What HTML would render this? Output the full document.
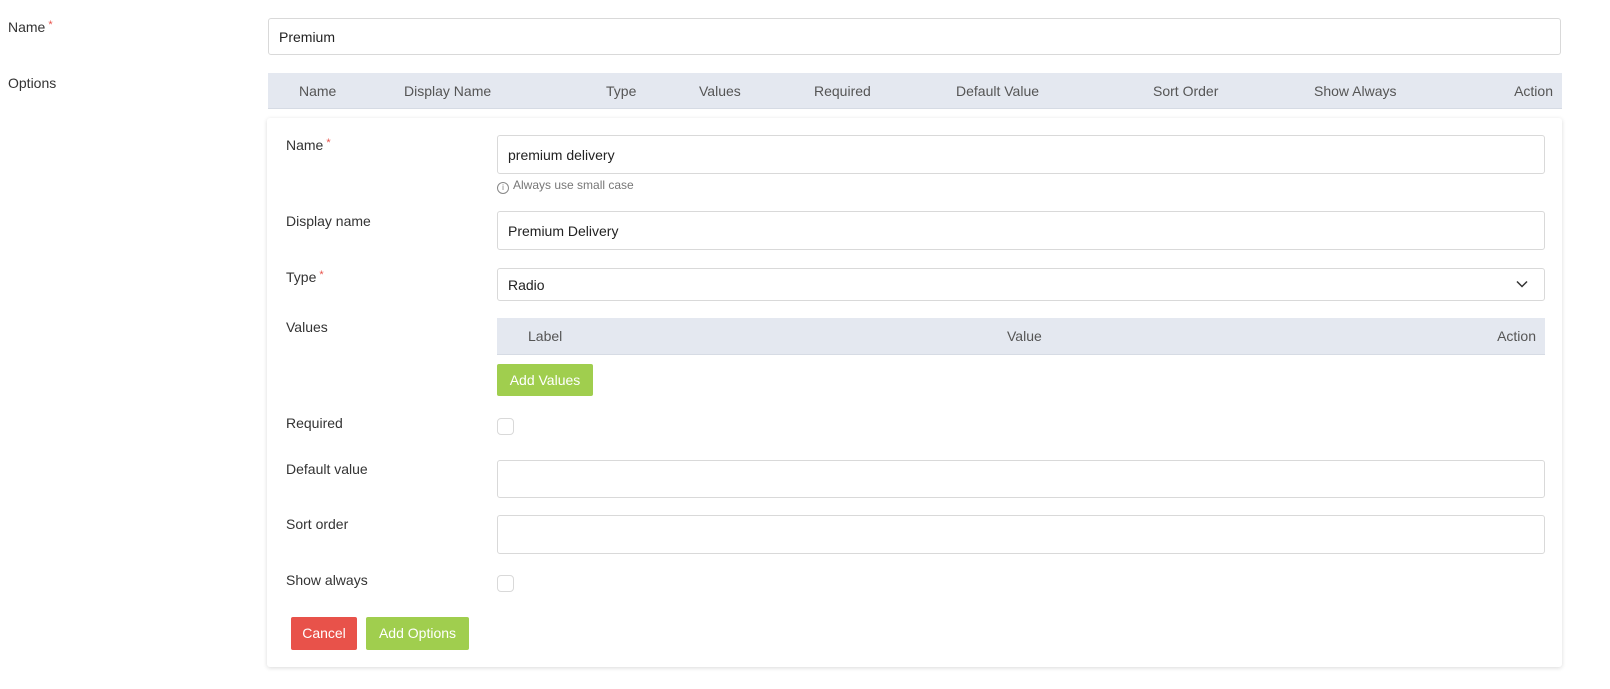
<!DOCTYPE html>
<html><head><style>
body{margin:0;width:1610px;height:689px;background:#fff;font-family:"Liberation Sans",sans-serif;font-size:14px;color:#333;position:relative;overflow:hidden}
.a{position:absolute;white-space:nowrap}
.inp{position:absolute;border:1px solid #d9d9d9;border-radius:3px;box-sizing:border-box;background:#fff}
.inp span{position:absolute;left:10px;top:50%;transform:translateY(-50%);color:#222}
.req{color:#e8524a;font-size:11px;vertical-align:top;margin-left:3px}
.hd{position:absolute;background:#e4e8f0;border-bottom:1px solid #d6dbe4;box-sizing:border-box}
.hd .a{top:50%;transform:translateY(-50%);color:#555}
.cb{position:absolute;width:17px;height:17px;border:1px solid #d9d9d9;border-radius:4px;box-sizing:border-box}
.btn{position:absolute;color:#fff;border-radius:2px;text-align:center;font-size:14px}
</style></head><body>
<div class="a" style="left:8px;top:19px">Name<span class="req">*</span></div>
<div class="inp" style="left:268px;top:18px;width:1293px;height:37px"><span>Premium</span></div>
<div class="a" style="left:8px;top:75px">Options</div>
<div class="hd" style="left:268px;top:73px;width:1294px;height:36px">
<div class="a" style="left:31px">Name</div><div class="a" style="left:136px">Display Name</div><div class="a" style="left:338px">Type</div><div class="a" style="left:431px">Values</div><div class="a" style="left:546px">Required</div><div class="a" style="left:688px">Default Value</div><div class="a" style="left:885px">Sort Order</div><div class="a" style="left:1046px">Show Always</div><div class="a" style="right:9px">Action</div>
</div>
<div style="position:absolute;left:267px;top:118px;width:1295px;height:549px;background:#fff;box-shadow:0 1px 4px rgba(0,0,0,.15);border-radius:3px"></div>
<div class="a" style="left:286px;top:137px">Name<span class="req">*</span></div>
<div class="inp" style="left:497px;top:135px;width:1048px;height:39px"><span>premium delivery</span></div>
<div class="a" style="left:497px;top:178px;font-size:12px;color:#777"><span style="display:inline-block;width:10px;height:10px;border:1px solid #888;border-radius:50%;font-size:8px;line-height:10px;text-align:center;vertical-align:-1px;margin-right:4px">i</span>Always use small case</div>
<div class="a" style="left:286px;top:213px">Display name</div>
<div class="inp" style="left:497px;top:211px;width:1048px;height:39px"><span>Premium Delivery</span></div>
<div class="a" style="left:286px;top:269px">Type<span class="req">*</span></div>
<div class="inp" style="left:497px;top:268px;width:1048px;height:33px"><span>Radio</span>
<svg style="position:absolute;right:16px;top:11px" width="12" height="8" viewBox="0 0 12 8"><path d="M1 1.5l5 5 5-5" fill="none" stroke="#333" stroke-width="1.5"/></svg></div>
<div class="a" style="left:286px;top:319px">Values</div>
<div class="hd" style="left:497px;top:318px;width:1048px;height:37px">
<div class="a" style="left:31px">Label</div><div class="a" style="left:510px">Value</div><div class="a" style="right:9px">Action</div></div>
<div class="btn" style="left:497px;top:364px;width:96px;height:32px;line-height:32px;background:#a0ce4e">Add Values</div>
<div class="a" style="left:286px;top:415px">Required</div>
<div class="cb" style="left:497px;top:418px"></div>
<div class="a" style="left:286px;top:461px">Default value</div>
<div class="inp" style="left:497px;top:460px;width:1048px;height:38px"></div>
<div class="a" style="left:286px;top:516px">Sort order</div>
<div class="inp" style="left:497px;top:515px;width:1048px;height:39px"></div>
<div class="a" style="left:286px;top:572px">Show always</div>
<div class="cb" style="left:497px;top:575px"></div>
<div class="btn" style="left:291px;top:617px;width:66px;height:33px;line-height:33px;background:#e8524a">Cancel</div>
<div class="btn" style="left:366px;top:617px;width:103px;height:33px;line-height:33px;background:#a0ce4e">Add Options</div>
</body></html>
